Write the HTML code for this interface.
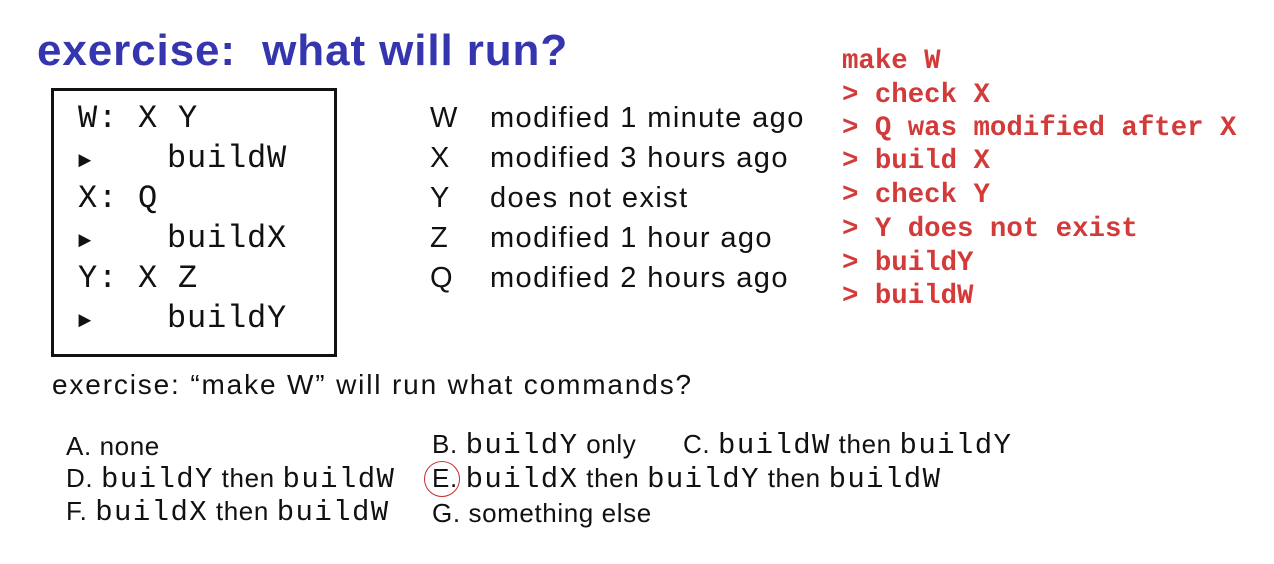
<!DOCTYPE html>
<html><head><meta charset="utf-8"><style>
body{margin:0;width:1274px;height:564px;background:#fff;position:relative;overflow:hidden;font-family:"Liberation Sans",sans-serif;color:#111}
.a{position:absolute;white-space:pre;line-height:1}
.t{left:37px;top:29px;font-size:44px;font-weight:bold;color:#3535b0;letter-spacing:0.9px}
.box{position:absolute;left:51px;top:88px;width:280px;height:263px;border:3px solid #111}
.m{font-family:"Liberation Mono",monospace}
.code{font-size:32px;letter-spacing:0.8px}
.tb{font-size:29px;letter-spacing:1.4px}
.r{font-family:"Liberation Mono",monospace;font-weight:bold;color:#d33a3a;font-size:27.4px}
.o{font-size:26px;letter-spacing:0.6px}
.o .m{font-size:29px;letter-spacing:1.4px}
.tri{font-size:22px}
</style></head><body>
<div class="a t">exercise:  what will run?</div>
<div class="box"></div>
<div class="a m code" style="left:78px;top:103px">W: X Y</div>
<div class="a m code" style="left:78px;top:143px"><span class="tri">►</span></div><div class="a m code" style="left:167px;top:143px">buildW</div>
<div class="a m code" style="left:78px;top:183px">X: Q</div>
<div class="a m code" style="left:78px;top:223px"><span class="tri">►</span></div><div class="a m code" style="left:167px;top:223px">buildX</div>
<div class="a m code" style="left:78px;top:263px">Y: X Z</div>
<div class="a m code" style="left:78px;top:303px"><span class="tri">►</span></div><div class="a m code" style="left:167px;top:303px">buildY</div>

<div class="a tb" style="left:430px;top:104px">W</div><div class="a tb" style="left:490px;top:104px">modified 1 minute ago</div>
<div class="a tb" style="left:430px;top:144px">X</div><div class="a tb" style="left:490px;top:144px">modified 3 hours ago</div>
<div class="a tb" style="left:430px;top:184px">Y</div><div class="a tb" style="left:490px;top:184px">does not exist</div>
<div class="a tb" style="left:430px;top:224px">Z</div><div class="a tb" style="left:490px;top:224px">modified 1 hour ago</div>
<div class="a tb" style="left:430px;top:264px">Q</div><div class="a tb" style="left:490px;top:264px">modified 2 hours ago</div>

<div class="a r" style="left:842px;top:48px">make W</div>
<div class="a r" style="left:842px;top:82px">&gt; check X</div>
<div class="a r" style="left:842px;top:115px">&gt; Q was modified after X</div>
<div class="a r" style="left:842px;top:148px">&gt; build X</div>
<div class="a r" style="left:842px;top:182px">&gt; check Y</div>
<div class="a r" style="left:842px;top:216px">&gt; Y does not exist</div>
<div class="a r" style="left:842px;top:250px">&gt; buildY</div>
<div class="a r" style="left:842px;top:283px">&gt; buildW</div>

<div class="a" style="left:52px;top:371px;font-size:28px;letter-spacing:1.85px">exercise: “make W” will run what commands?</div>

<div class="a o" style="left:66px;top:433px">A. none</div>
<div class="a o" style="left:432px;top:431px">B. <span class="m">buildY</span> only</div>
<div class="a o" style="left:683px;top:431px">C. <span class="m">buildW</span> then <span class="m">buildY</span></div>
<div class="a o" style="left:66px;top:465px">D. <span class="m">buildY</span> then <span class="m">buildW</span></div>
<div class="a o" style="left:432px;top:465px">E. <span class="m">buildX</span> then <span class="m">buildY</span> then <span class="m">buildW</span></div>
<div style="position:absolute;left:424px;top:461px;width:34px;height:34px;border:1.5px solid #c83030;border-radius:50%"></div>
<div class="a o" style="left:66px;top:498px">F. <span class="m">buildX</span> then <span class="m">buildW</span></div>
<div class="a o" style="left:432px;top:500px">G. something else</div>
</body></html>
